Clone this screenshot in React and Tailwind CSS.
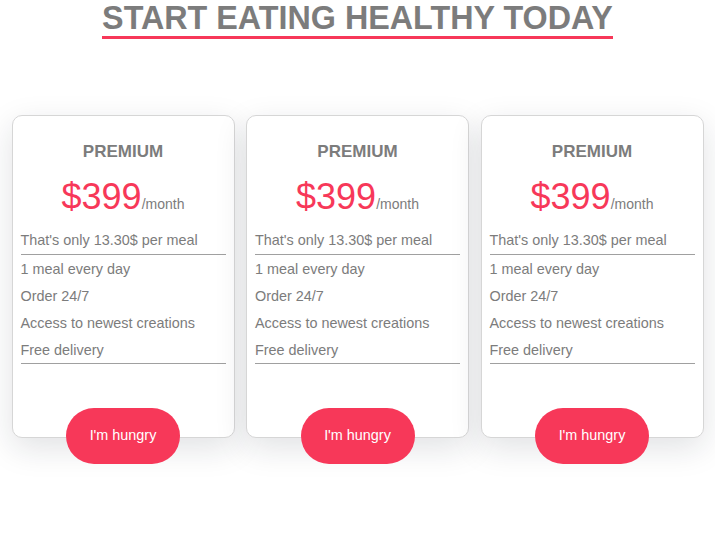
const features = [
  "1 meal every day",
  "Order 24/7",
  "Access to newest creations",
  "Free delivery",
];

function PlanCard() {
  return (
    <div className="flex w-[223px] flex-col rounded-[10px] border border-[#d6d6d6] bg-white px-[8px] pt-[26px] shadow-[0_10px_32px_rgba(20,30,50,0.13)]">
      <h3 className="text-center text-[17px] font-bold leading-[19px] text-[#7c7c7c]">
        PREMIUM
      </h3>
      <div className="mt-[15px] flex items-baseline justify-center text-[#f73859]">
        <span className="text-[36px] leading-[41px]">$399</span>
        <span className="text-[14px] text-[#7c7c7c]">/month</span>
      </div>
      <ul className="mt-[10px] text-[14.4px] text-[#7c7c7c]">
        <li className="h-[28px] border-b border-[#a0a0a0] leading-[27px]">
          That's only 13.30$ per meal
        </li>
        {features.map((f, i) => (
          <li
            key={f}
            className={
              i === features.length - 1
                ? "h-[28px] border-b border-[#a0a0a0] leading-[28px]"
                : "h-[27px] leading-[28px]"
            }
          >
            {f}
          </li>
        ))}
      </ul>
      <button className="mt-[44px] -mb-[27px] h-[56px] w-[114px] self-center rounded-full bg-[#f73859] text-[14.4px] text-white">
        I'm hungry
      </button>
    </div>
  );
}

export default function App() {
  return (
    <div className="min-h-[536px] w-[715px] bg-white font-['Liberation_Sans',Arial,sans-serif]">
      <div className="flex justify-center">
        <h1 className="border-b-[3px] border-[#f73859] text-[32.3px] font-bold leading-[36px] text-[#7c7c7c]">
          START EATING HEALTHY TODAY
        </h1>
      </div>
      <div className="mt-[76px] flex justify-evenly">
        <PlanCard />
        <PlanCard />
        <PlanCard />
      </div>
    </div>
  );
}
